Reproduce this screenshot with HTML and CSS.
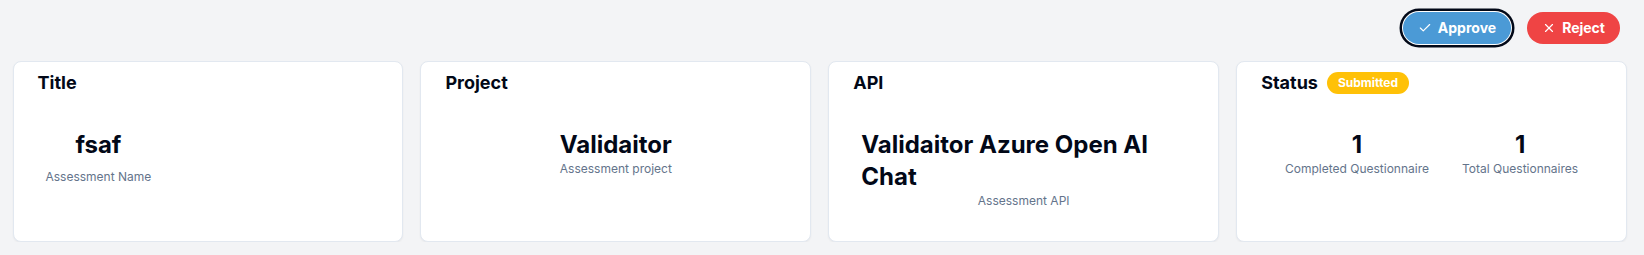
FILE: index.html
```html
<!DOCTYPE html>
<html lang="en">
<head>
<meta charset="utf-8">
<title>Assessment</title>
<link rel="stylesheet" href="styles.css">
</head>
<body>
<div class="page">
  <div class="actions">
    <button class="btn btn-approve">
      <svg class="ico" viewBox="0 0 24 24" fill="none" stroke="currentColor" stroke-width="2" stroke-linecap="round" stroke-linejoin="round"><path d="M20 6 9 17l-5-5"/></svg>
      Approve
    </button>
    <button class="btn btn-reject">
      <svg class="ico" viewBox="0 0 24 24" fill="none" stroke="currentColor" stroke-width="2" stroke-linecap="round" stroke-linejoin="round"><path d="M18 6 6 18"/><path d="m6 6 12 12"/></svg>
      Reject
    </button>
  </div>
  <div class="cards">
    <div class="card">
      <div class="card-head"><h3>Title</h3></div>
      <div class="card-body">
        <div class="name-col">
          <div class="big">fsaf</div>
          <div class="label label-spaced">Assessment Name</div>
        </div>
      </div>
    </div>
    <div class="card">
      <div class="card-head"><h3>Project</h3></div>
      <div class="card-body center">
        <div class="big">Validaitor</div>
        <div class="label">Assessment project</div>
      </div>
    </div>
    <div class="card">
      <div class="card-head"><h3>API</h3></div>
      <div class="card-body">
        <div class="big">Validaitor Azure Open AI Chat</div>
        <div class="label center">Assessment API</div>
      </div>
    </div>
    <div class="card">
      <div class="card-head"><h3>Status</h3><span class="badge">Submitted</span></div>
      <div class="card-body stats">
        <div class="stat">
          <div class="big">1</div>
          <div class="label">Completed Questionnaire</div>
        </div>
        <div class="stat">
          <div class="big">1</div>
          <div class="label">Total Questionnaires</div>
        </div>
      </div>
    </div>
  </div>
</div>
</body>
</html>
```

FILE: styles.css
```css
* { box-sizing: border-box; }
html, body { margin: 0; padding: 0; }
body {
  background: #f3f4f6;
  font-family: Inter, "Liberation Sans", sans-serif;
  color: #020817;
}
.page {
  padding: 11.5px 17px 0 12.5px;
}
.actions {
  display: flex;
  justify-content: flex-end;
  gap: 16px;
  padding-right: 7px;
  margin-bottom: 17.5px;
}
.btn {
  display: inline-flex;
  align-items: center;
  gap: 6px;
  height: 32px;
  padding: 0 15px;
  border: none;
  border-radius: 9999px;
  color: #fff;
  font-family: Inter, "Liberation Sans", sans-serif;
  font-size: 14px;
  font-weight: 700;
  cursor: pointer;
}
.ico { width: 14px; height: 14px; }
.btn-approve {
  background: #4b9ad6;
  box-shadow: 0 0 0 1px #ffffff, 0 0 0 3.5px #020817;
}
.btn-reject {
  background: #ef4444;
}
.cards {
  display: grid;
  grid-template-columns: repeat(4, 1fr);
  gap: 17px;
}
.card {
  background: #fff;
  border: 1px solid #e2e8f0;
  border-radius: 8px;
  box-shadow: 0 1px 2px rgba(0, 0, 0, 0.05);
}
.card-head {
  display: flex;
  align-items: center;
  gap: 9px;
  padding: 7px 24px 0;
  height: 35px;
}
.card-head h3 {
  margin: 0;
  font-size: 18px;
  line-height: 28px;
  font-weight: 700;
}
.badge {
  display: inline-block;
  background: #ffc107;
  color: #fff;
  font-size: 12px;
  font-weight: 700;
  line-height: 16px;
  padding: 3px 11px;
  border-radius: 9999px;
}
.card-body {
  padding: 32px;
}
.center { text-align: center; }
.name-col {
  display: inline-flex;
  flex-direction: column;
  align-items: center;
}
.big {
  font-size: 24px;
  line-height: 32px;
  font-weight: 700;
}
.label {
  font-size: 12px;
  line-height: 16px;
  color: #64748b;
}
.label-spaced { margin-top: 8px; }
.stats {
  display: flex;
  justify-content: center;
  gap: 33px;
}
.stat {
  display: flex;
  flex-direction: column;
  align-items: center;
}
```
